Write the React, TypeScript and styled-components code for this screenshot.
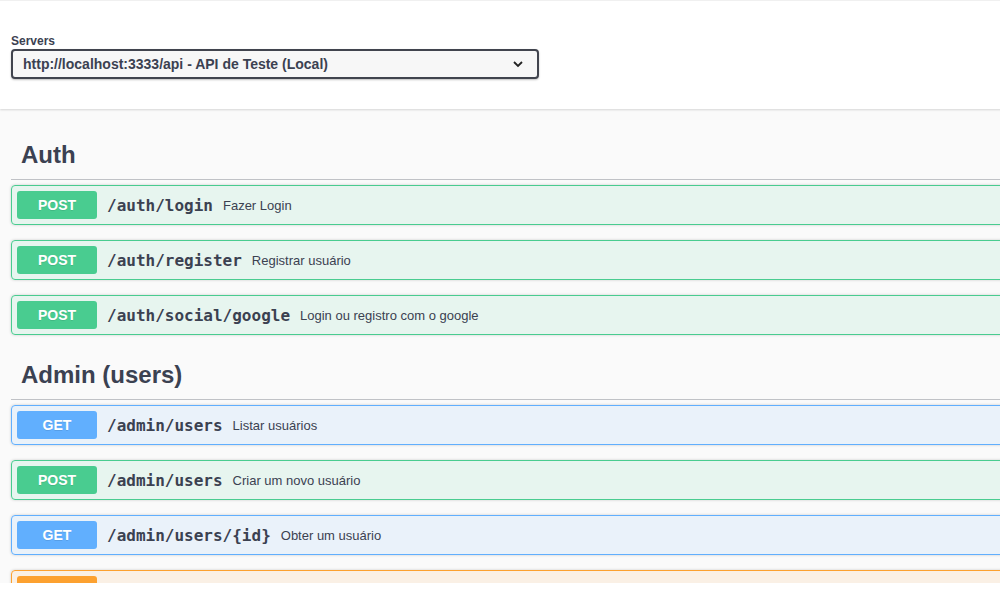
import React from "react";
import styled, { createGlobalStyle, css } from "styled-components";

type Method = "get" | "post" | "put";

const methodColors: Record<Method, string> = {
    get: "#61affe",
    post: "#49cc90",
    put: "#fca130",
};

const methodBg: Record<Method, string> = {
    get: "rgba(97, 175, 254, 0.1)",
    post: "rgba(73, 204, 144, 0.1)",
    put: "rgba(252, 161, 48, 0.1)",
};

const groups: { tag: string; ops: { method: Method; path: string; summary: string }[] }[] = [
    {
        tag: "Auth",
        ops: [
            { method: "post", path: "/auth/login", summary: "Fazer Login" },
            { method: "post", path: "/auth/register", summary: "Registrar usuário" },
            { method: "post", path: "/auth/social/google", summary: "Login ou registro com o google" },
        ],
    },
    {
        tag: "Admin (users)",
        ops: [
            { method: "get", path: "/admin/users", summary: "Listar usuários" },
            { method: "post", path: "/admin/users", summary: "Criar um novo usuário" },
            { method: "get", path: "/admin/users/{id}", summary: "Obter um usuário" },
            { method: "put", path: "/admin/users/{id}", summary: "Atualizar um usuário" },
        ],
    },
];

export default function App() {
    return (
        <>
            <GlobalStyle />
            <Viewport>
                <SchemeContainer>
                    <ServersLabel>Servers</ServersLabel>
                    <ServerSelect>
                        <span>http://localhost:3333/api - API de Teste (Local)</span>
                        <svg width="12" height="8" viewBox="0 0 12 8">
                            <path d="M2 2l4 4 4-4" fill="none" stroke="#222" strokeWidth="1.8" />
                        </svg>
                    </ServerSelect>
                </SchemeContainer>
                <Wrapper>
                    {groups.map((g) => (
                        <Section key={g.tag}>
                            <TagTitle>{g.tag}</TagTitle>
                            {g.ops.map((op, i) => (
                                <OpBlock key={i} $method={op.method}>
                                    <MethodBadge $method={op.method}>{op.method.toUpperCase()}</MethodBadge>
                                    <OpPath>{op.path}</OpPath>
                                    <OpSummary>{op.summary}</OpSummary>
                                </OpBlock>
                            ))}
                        </Section>
                    ))}
                </Wrapper>
            </Viewport>
        </>
    );
}

const GlobalStyle = createGlobalStyle`
    html, body {
        margin: 0;
        background: #fff;
        overflow: hidden;
    }
    body {
        font-family: "Liberation Sans", Arial, sans-serif;
        color: #3b4151;
    }
`;

const Viewport = styled.div`
    height: 583px;
    width: 1460px;
    overflow: hidden;
    background: #fafafa;
    border-top: 1px solid #f0f0f0;
    box-sizing: border-box;
`;

const SchemeContainer = styled.div`
    background: #fff;
    box-shadow: 0 1px 2px 0 rgba(0, 0, 0, 0.15);
    padding: 33px 11px 30px;
    margin-bottom: 21px;
`;

const ServersLabel = styled.div`
    font-size: 12px;
    font-weight: 700;
    line-height: 15px;
    color: #3b4151;
`;

const ServerSelect = styled.div`
    width: 528px;
    height: 30px;
    box-sizing: border-box;
    display: flex;
    align-items: center;
    justify-content: space-between;
    padding: 0 13px 0 10px;
    border: 2px solid #41444e;
    border-radius: 4px;
    background: #f7f7f7;
    box-shadow: 0 1px 2px 0 rgba(0, 0, 0, 0.25);
    font-size: 14px;
    font-weight: 700;
    color: #3b4151;
`;

const Wrapper = styled.div`
    padding: 0 11px;
`;

const Section = styled.div`
    margin-bottom: 0;
`;

const TagTitle = styled.h3`
    margin: 0 0 5px;
    padding: 10px 20px 10px 10px;
    font-size: 24px;
    line-height: 29px;
    font-weight: 700;
    color: #3b4151;
    border-bottom: 1px solid rgba(59, 65, 81, 0.3);
`;

const OpBlock = styled.div<{ $method: Method }>`
    display: flex;
    align-items: center;
    margin: 0 0 15px;
    padding: 5px;
    border: 1px solid;
    border-radius: 4px;
    box-shadow: 0 0 3px rgba(0, 0, 0, 0.19);
    ${({ $method }) => css`
        border-color: ${methodColors[$method]};
        background: ${methodBg[$method]};
    `}
`;

const MethodBadge = styled.span<{ $method: Method }>`
    min-width: 80px;
    padding: 6px 0;
    line-height: 16px;
    text-align: center;
    border-radius: 3px;
    font-size: 14px;
    font-weight: 700;
    color: #fff;
    text-shadow: 0 1px 0 rgba(0, 0, 0, 0.1);
    background: ${({ $method }) => methodColors[$method]};
`;

const OpPath = styled.span`
    padding: 0 10px;
    font-family: "DejaVu Sans Mono", monospace;
    font-size: 16px;
    font-weight: 600;
    color: #3b4151;
`;

const OpSummary = styled.span`
    font-size: 13px;
    color: #3b4151;
`;
